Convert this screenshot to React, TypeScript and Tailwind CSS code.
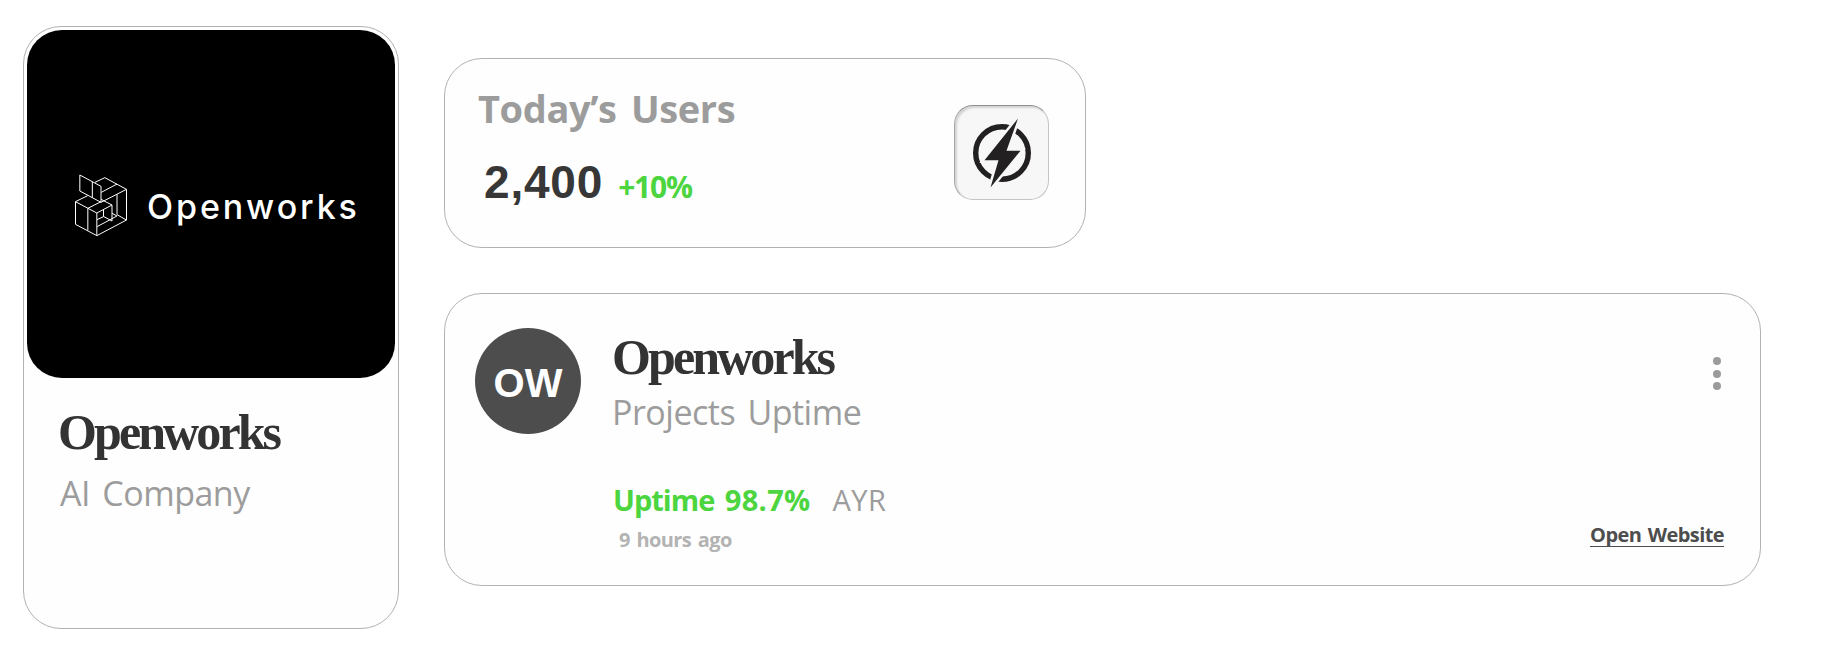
function OpenworksMark() {
  return (
    <svg
      viewBox="0 0 240 270"
      className="h-[90px] w-20 shrink-0"
      fill="none"
      stroke="#fff"
      strokeWidth="3"
      strokeLinejoin="round"
      aria-hidden="true"
    >
      {/* flag */}
      <path d="M59.500 48L123 82V130L59.500 96ZM97 69V116" />
      {/* back cube */}
      <path d="M105 70L134.500 56L199.500 91V183L110.500 230L46.500 196V128L83 110" />
      <path d="M123 130L199.500 91M171 75L124 100M171 106V167" />
      {/* front cube */}
      <path d="M46.500 128L110.500 162V230M83.500 148V214M83.500 148L123 128M110.500 162L156 138V186L130 172M123 121L156 138" />
      <path d="M130.500 152V173L111 182M111 203L171 171L156 163M171 167L199 183" />
    </svg>
  );
}

function BoltIcon() {
  return (
    <svg viewBox="0 0 60 72" className="h-[72px] w-[60px]" aria-hidden="true">
      <circle cx="30" cy="36" r="26.300" fill="none" stroke="#222021" strokeWidth="5.400" />
      <path
        d="M46 1.500L34.500 33.800H48.500L18.500 70.500L26.500 43.300H12.500Z"
        fill="#222021"
        stroke="#f7f7f7"
        strokeWidth="5"
        paintOrder="stroke"
      />
    </svg>
  );
}

function CompanyCard() {
  return (
    <div className="h-[603px] w-[376px] shrink-0 rounded-[38px] border border-[#b2b2b2] bg-[#fefefe] p-[3px]">
      <div className="flex h-[348px] w-[368px] items-center rounded-[35px] bg-black pl-[33px]">
        <OpenworksMark />
        <span className="ml-[7px] pt-[5px] font-['Inter'] text-[34px] leading-10 font-medium tracking-[2.9px] text-white">
          Openworks
        </span>
      </div>
      <div className="pt-[25px] pl-[31px] whitespace-nowrap">
        <h2 className="font-['Liberation_Serif'] text-[50px] leading-[58px] font-bold tracking-[-2.9px] text-[#333]">
          Openworks
        </h2>
        <p className="mt-[8px] pl-0.5 font-['Open_Sans'] text-[34px] leading-[48px] tracking-[-0.5px] [word-spacing:4px] text-[#9c9c9c]">
          AI Company
        </p>
      </div>
    </div>
  );
}

function UsersCard() {
  return (
    <div className="flex h-[190px] w-[642px] justify-between rounded-[38px] border border-[#b2b2b2] bg-[#fefefe] pr-9 pl-[33px]">
      <div className="pt-[23px] whitespace-nowrap">
        <h3 className="font-['Open_Sans'] text-[38px] leading-[52px] font-bold tracking-[-0.4px] [word-spacing:5px] text-[#9c9c9c]">
          Today’s Users
        </h3>
        <div className="mt-[21px] flex items-baseline gap-4 pl-[6px]">
          <span className="font-['Liberation_Sans'] text-[46px] leading-[54px] font-bold tracking-[0.8px] text-[#373737]">
            2,400
          </span>
          <span className="-ml-px font-['Open_Sans'] text-[30px] leading-9 font-bold tracking-[-1.2px] text-[#4cd53e]">
            +10%
          </span>
        </div>
      </div>
      <div className="mt-[46px] flex h-[95px] w-[95px] items-center justify-center rounded-[19px] border border-[#c4c4c4] border-t-[#8f8f8f] border-l-[#a5a5a5] bg-[#f7f7f7] shadow-[inset_2px_2px_2px_rgba(0,0,0,0.14)]">
        <BoltIcon />
      </div>
    </div>
  );
}

function UptimeCard() {
  return (
    <div className="flex h-[293px] w-[1317px] rounded-[38px] border border-[#b2b2b2] bg-[#fefefe] pr-9 pl-[30px]">
      <div className="mt-[34px] flex h-[106px] w-[106px] shrink-0 items-center justify-center rounded-full bg-[#4d4d4d]">
        <span className="pt-1 font-['Liberation_Sans'] text-[40px] leading-none font-bold text-white">OW</span>
      </div>
      <div className="flex-1 pt-[34px] pl-[31px] whitespace-nowrap">
        <h2 className="font-['Liberation_Serif'] text-[50px] leading-[58px] font-bold tracking-[-2.9px] text-[#333]">
          Openworks
        </h2>
        <p className="mt-0.5 font-['Open_Sans'] text-[34px] leading-[48px] tracking-[-0.5px] [word-spacing:4px] text-[#9c9c9c]">
          Projects Uptime
        </p>
        <div className="mt-[44px] flex items-baseline gap-[22px] pl-px">
          <span className="font-['Open_Sans'] text-[29px] leading-10 font-bold text-[#4cd53e]">
            <span className="tracking-[-1px] [word-spacing:4px]">Uptime </span>
            <span className="tracking-[0.3px]">98.7%</span>
          </span>
          <span className="font-['Open_Sans'] text-[29px] leading-10 tracking-[0.5px] text-[#9c9c9c]">AYR</span>
        </div>
        <p className="mt-[6px] pl-[7px] font-['Open_Sans'] text-[20px] leading-7 font-bold tracking-[-0.6px] [word-spacing:2px] text-[#b3b3b3]">
          9 hours ago
        </p>
      </div>
      <div className="flex flex-col items-end justify-between pt-[63px] pb-[38px]">
        <button className="mr-[3px] flex flex-col gap-[4.5px]" aria-label="More options">
          <span className="h-2 w-2 rounded-full bg-[#9b9b9b]" />
          <span className="h-2 w-2 rounded-full bg-[#9b9b9b]" />
          <span className="h-2 w-2 rounded-full bg-[#9b9b9b]" />
        </button>
        <a
          href="#"
          className="border-b border-[#4d4d4d] font-['Open_Sans'] text-[20px] leading-[22px] font-bold tracking-[-0.6px] whitespace-nowrap [word-spacing:2px] text-[#4d4d4d]"
        >
          Open Website
        </a>
      </div>
    </div>
  );
}

export default function App() {
  return (
    <div className="flex h-[656px] w-full gap-[45px] overflow-hidden bg-white pl-[23px]">
      <div className="pt-[26px]">
        <CompanyCard />
      </div>
      <div className="flex flex-col gap-[45px] pt-[58px]">
        <UsersCard />
        <UptimeCard />
      </div>
    </div>
  );
}
